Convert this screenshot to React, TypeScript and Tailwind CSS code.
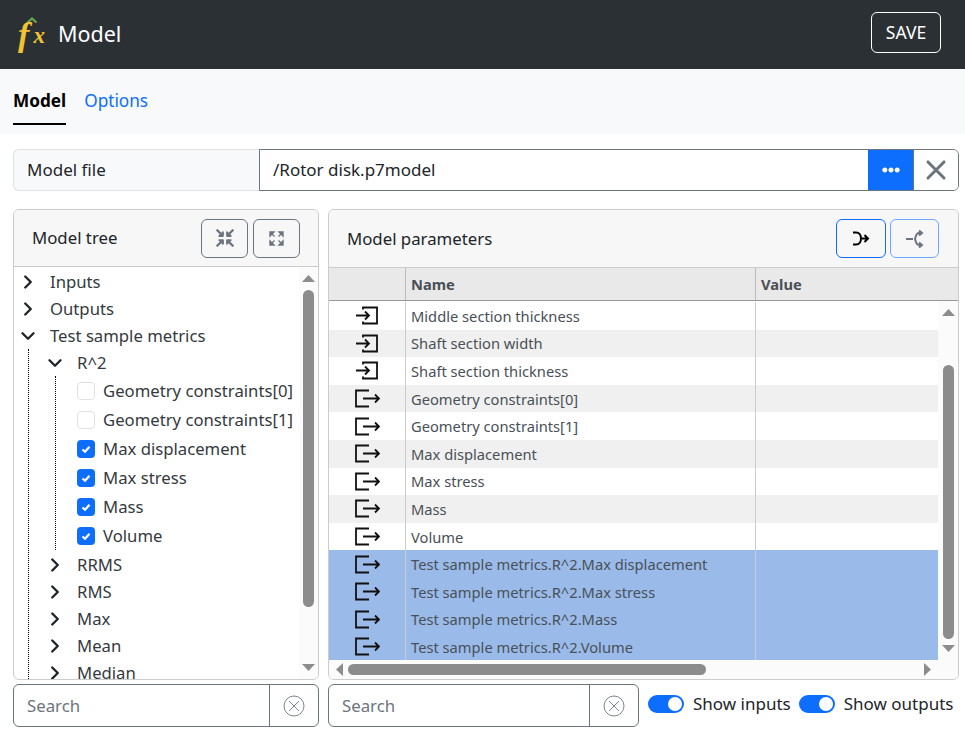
import { ChevronDown, ChevronRight, X } from "lucide-react";
import { FaEllipsisH, FaCompressArrowsAlt } from "react-icons/fa";

const font = "font-['Noto_Sans','Open_Sans',sans-serif]";

const treeTail = ["RRMS", "RMS", "Max", "Mean", "Median"];
const checks = [
  { label: "Geometry constraints[0]", on: false },
  { label: "Geometry constraints[1]", on: false },
  { label: "Max displacement", on: true },
  { label: "Max stress", on: true },
  { label: "Mass", on: true },
  { label: "Volume", on: true },
];
const rows = [
  { kind: "in", name: "Middle section thickness" },
  { kind: "in", name: "Shaft section width" },
  { kind: "in", name: "Shaft section thickness" },
  { kind: "out", name: "Geometry constraints[0]" },
  { kind: "out", name: "Geometry constraints[1]" },
  { kind: "out", name: "Max displacement" },
  { kind: "out", name: "Max stress" },
  { kind: "out", name: "Mass" },
  { kind: "out", name: "Volume" },
  { kind: "out", name: "Test sample metrics.R^2.Max displacement", sel: true },
  { kind: "out", name: "Test sample metrics.R^2.Max stress", sel: true },
  { kind: "out", name: "Test sample metrics.R^2.Mass", sel: true },
  { kind: "out", name: "Test sample metrics.R^2.Volume", sel: true },
];

function InIcon() {
  return (
    <svg width="22" height="19" viewBox="0 0 22 19" fill="none" stroke="#111" strokeWidth="1.8">
      <path d="M7 3.5V1.5h14v16H7v-2M0 9.5h13M9 5.5l4 4-4 4" />
    </svg>
  );
}

function OutIcon() {
  return (
    <svg width="25" height="19" viewBox="0 0 25 19" fill="none" stroke="#111" strokeWidth="1.8">
      <path d="M14 1.5H1v16h13M8 9.5h16M20 5.5l4 4-4 4" />
    </svg>
  );
}

function ExpandIcon() {
  return (
    <svg width="15" height="15" viewBox="0 0 15 15" fill="#6c757d" stroke="#6c757d" strokeWidth="1.4">
      <path d="M1 1h4L1 5zM14 1h-4l4 4zM1 14h4l-4-4zM14 14h-4l4-4z" />
      <path d="M2 2l3.5 3.5M13 2L9.5 5.5M2 13l3.5-3.5M13 13L9.5 9.5" fill="none" />
    </svg>
  );
}

function Logo() {
  return (
    <svg width="32" height="38" viewBox="0 0 32 38">
      <path d="M12.5 6.5l4.5-4 4.5 4" fill="none" stroke="#6aa84f" strokeWidth="2.2" />
      <text x="3" y="30" fontFamily="Liberation Serif" fontStyle="italic" fontWeight="bold" fontSize="34" fill="#f1c232">f</text>
      <text x="18.500" y="27" fontFamily="Liberation Serif" fontStyle="italic" fontWeight="bold" fontSize="23" fill="#f1c232">x</text>
    </svg>
  );
}

function Check({ on }: { on: boolean }) {
  return on ? (
    <span className="flex h-[18px] w-[18px] items-center justify-center rounded-[4px] bg-[#0d6efd]">
      <svg width="12" height="12" viewBox="0 0 12 12" fill="none" stroke="#fff" strokeWidth="2.2">
        <path d="M2.5 6.5l2.5 2.3 4.5-5" />
      </svg>
    </span>
  ) : (
    <span className="h-[18px] w-[18px] rounded-[4px] border border-[#dee2e6] bg-white" />
  );
}

function ScrollArrow({ dir }: { dir: "up" | "down" | "left" | "right" }) {
  const p = { up: "M0 7L6.5 0L13 7Z", down: "M0 0L6.5 7L13 0Z", left: "M7 0L0 6.5L7 13Z", right: "M0 0L7 6.5L0 13Z" }[dir];
  const horizontal = dir === "left" || dir === "right";
  return (
    <svg width={horizontal ? 7 : 13} height={horizontal ? 13 : 7} viewBox={horizontal ? "0 0 7 13" : "0 0 13 7"} fill="#8c8c8c">
      <path d={p} />
    </svg>
  );
}

function SearchBox({ width }: { width: string }) {
  return (
    <div className={`flex h-[43px] rounded-[6px] border border-[#6c757d] bg-white ${width}`}>
      <div className="flex-1 pl-[13px] text-[16.8px] leading-[41px] text-[#6c757d]">Search</div>
      <div className="flex w-[49px] items-center justify-center border-l border-[#6c757d]">
        <svg width="22" height="22" viewBox="0 0 22 22" fill="none" stroke="#7d8791" strokeWidth="1">
          <circle cx="11" cy="11" r="10" />
          <path d="M6 6l10 10M16 6L6 16" />
        </svg>
      </div>
    </div>
  );
}

function Toggle({ label }: { label: string }) {
  return (
    <div className="flex items-center gap-[9px]">
      <span className="flex h-[18px] w-[36px] items-center justify-end rounded-full bg-[#0d6efd] pr-[2px]">
        <span className="h-[14px] w-[14px] rounded-full bg-white" />
      </span>
      <span className="text-[17px] text-[#212529]">{label}</span>
    </div>
  );
}

function TreeRow({ label, open, indent = 8 }: { label: string; open?: boolean; indent?: number }) {
  return (
    <div className="flex h-[27px] items-center whitespace-nowrap" style={{ paddingLeft: indent }}>
      <span className="flex w-[28px] shrink-0 items-center text-[#212529]">
        {open ? <ChevronDown size={22} strokeWidth={2.6} className="-ml-[5px]" /> : <ChevronRight size={22} strokeWidth={2.6} className="-ml-[5px]" />}
      </span>
      <span>{label}</span>
    </div>
  );
}

export default function App() {
  return (
    <div className={`flex h-[733px] w-[965px] flex-col overflow-hidden bg-white ${font}`}>
      <header className="flex h-[69px] items-center justify-between bg-[#2b3035] pl-[15px] pr-[24px]">
        <div className="flex items-center gap-[11px]">
          <Logo />
          <span className="mb-[1px] text-[21.5px] text-white">Model</span>
        </div>
        <button type="button" className="mb-[4px] h-[41px] w-[70px] rounded-[6px] border border-white text-[17.5px] text-white">SAVE</button>
      </header>

      <nav className="flex h-[65px] items-start gap-[18px] bg-[#f8f9fa] px-[13px] pt-[18px] text-[17.2px]">
        <span className="h-[38px] border-b-2 border-black font-bold leading-[28px] text-black">Model</span>
        <span className="leading-[28px] text-[#0d6efd]">Options</span>
      </nav>

      <div className="ml-[13px] mr-[6px] mt-[15px] flex h-[42px] text-[17px]">
        <div className="flex w-[246px] items-center rounded-l-[6px] border border-r-0 border-[#dee2e6] bg-[#f8f9fa] pl-[13px] text-[#212529]">Model file</div>
        <div className="flex flex-1 overflow-hidden rounded-r-[6px] border border-[#6c757d]">
          <div className="flex flex-1 items-center bg-white pl-[13px] text-[#212529]">/Rotor disk.p7model</div>
          <div className="flex w-[45px] items-center justify-center bg-[#0d6efd] text-white"><FaEllipsisH size={18} /></div>
          <div className="flex w-[45px] items-center justify-center border-l border-[#6c757d] bg-white text-[#6c757d]"><X size={32} strokeWidth={2.3} /></div>
        </div>
      </div>

      <div className="ml-[13px] mt-[18px] flex h-[471px] gap-[9px]">
        <section className="flex w-[306px] flex-col overflow-hidden rounded-[6px] border border-[#ccc]">
          <div className="flex h-[57px] shrink-0 items-center justify-between border-b border-[#ccc] bg-[#f7f7f7] pl-[18px] pr-[18px]">
            <span className="text-[16.8px] text-[#212529]">Model tree</span>
            <div className="flex gap-[5px]">
              <button type="button" className="flex h-[39px] w-[47px] items-center justify-center rounded-[6px] border border-[#6c757d] text-[#6c757d]"><FaCompressArrowsAlt size={18} /></button>
              <button type="button" className="flex h-[39px] w-[47px] items-center justify-center rounded-[6px] border border-[#6c757d]"><ExpandIcon /></button>
            </div>
          </div>
          <div className="flex min-h-0 flex-1">
            <div className="min-w-0 flex-1 overflow-hidden pt-[1px] text-[16.7px] text-[#343a40]">
              <TreeRow label="Inputs" />
              <TreeRow label="Outputs" />
              <TreeRow label="Test sample metrics" open />
              <div className="ml-[14px] h-[340px] border-l border-dotted border-black">
                <div className="pl-[20px]">
                  <TreeRow label="R^2" open indent={0} />
                  <div className="mb-[1px] ml-[6px] border-l border-dotted border-black pl-[21px]">
                    {checks.map((c) => (
                      <div key={c.label} className="flex h-[29px] items-center gap-[8px] whitespace-nowrap">
                        <Check on={c.on} />
                        <span>{c.label}</span>
                      </div>
                    ))}
                  </div>
                  {treeTail.map((t) => (
                    <TreeRow key={t} label={t} indent={0} />
                  ))}
                </div>
              </div>
            </div>
            <div className="flex w-[19px] shrink-0 flex-col items-center bg-[#fbfbfb] pb-[8px] pt-[8px]">
              <ScrollArrow dir="up" />
              <div className="mt-[8px] h-[317px] w-[11px] rounded-full bg-[#8c8c8c]" />
              <div className="flex-1" />
              <ScrollArrow dir="down" />
            </div>
          </div>
        </section>

        <section className="flex w-[631px] flex-col overflow-hidden rounded-[6px] border border-[#ccc]">
          <div className="flex h-[57px] shrink-0 items-center justify-between bg-[#f7f7f7] pl-[18px] pr-[19px]">
            <span className="text-[16.8px] text-[#212529]">Model parameters</span>
            <div className="flex gap-[4px]">
              <button type="button" className="flex h-[39px] w-[50px] items-center justify-center rounded-[6px] border border-[#0d6efd] text-black">
                <svg width="18" height="15" viewBox="0 0 18 15" fill="none" stroke="currentColor" strokeWidth="2">
                  <path d="M1 1.5h3c3.500 0 5 3 5 6s-1.500 6-5 6H1M9 7.500h7M12.500 4l3.500 3.500-3.500 3.500" />
                </svg>
              </button>
              <button type="button" className="flex h-[39px] w-[49px] items-center justify-center rounded-[6px] border border-[#6ea8fe] text-[#6c757d]">
                <svg width="18" height="18" viewBox="0 0 18 18" fill="none" stroke="currentColor" strokeWidth="2">
                  <path d="M0 9h7M16 3h-3c-3 0-3 3-4 6 1 3 1 6 4 6h3M13 0.500l3 2.500-3 2.500M13 12.500l3 2.500-3 2.500" />
                </svg>
              </button>
            </div>
          </div>
          <div className="flex h-[34px] shrink-0 border-y border-b-[#999] border-t-[#ccc] bg-[#e9e9e9] text-[14.7px] font-bold text-[#495057]">
            <div className="w-[77px] border-r border-[#bbb]" />
            <div className="flex w-[350px] items-center border-r border-[#bbb] pl-[5px]">Name</div>
            <div className="flex flex-1 items-center pl-[5px]">Value</div>
          </div>
          <div className="flex min-h-0 flex-1">
            <div className="min-w-0 flex-1 overflow-hidden pt-[1px] text-[14.7px] text-[#495057]">
              {rows.map((r, i) => (
                <div key={r.name} className={`flex h-[27.6px] ${r.sel ? "bg-[#9abbe9]" : i % 2 === 1 ? "bg-[#f0f0f0]" : "bg-white"}`}>
                  <div className="flex w-[77px] items-center justify-center border-r border-[#ccc]">
                    {r.kind === "in" ? <InIcon /> : <OutIcon />}
                  </div>
                  <div className="flex w-[350px] items-center whitespace-nowrap border-r border-[#ccc] pl-[5px]">{r.name}</div>
                  <div className="flex-1" />
                </div>
              ))}
            </div>
            <div className="flex w-[20px] shrink-0 flex-col items-center bg-[#fbfbfb] pb-[8px] pt-[8px]">
              <ScrollArrow dir="up" />
              <div className="mt-[49px] h-[274px] w-[11px] rounded-full bg-[#8c8c8c]" />
              <div className="flex-1" />
              <ScrollArrow dir="down" />
            </div>
          </div>
          <div className="flex h-[19px] shrink-0 items-center bg-[#fbfbfb] pl-[7px] pr-[27px]">
            <ScrollArrow dir="left" />
            <div className="ml-[5px] h-[11px] w-[358px] rounded-full bg-[#8c8c8c]" />
            <div className="flex-1" />
            <ScrollArrow dir="right" />
          </div>
        </section>
      </div>

      <div className="ml-[13px] mt-[4px] flex items-center gap-[9px]">
        <SearchBox width="w-[306px]" />
        <SearchBox width="w-[311px]" />
        <div className="mb-[3px] flex gap-[8px]">
          <Toggle label="Show inputs" />
          <Toggle label="Show outputs" />
        </div>
      </div>
    </div>
  );
}
